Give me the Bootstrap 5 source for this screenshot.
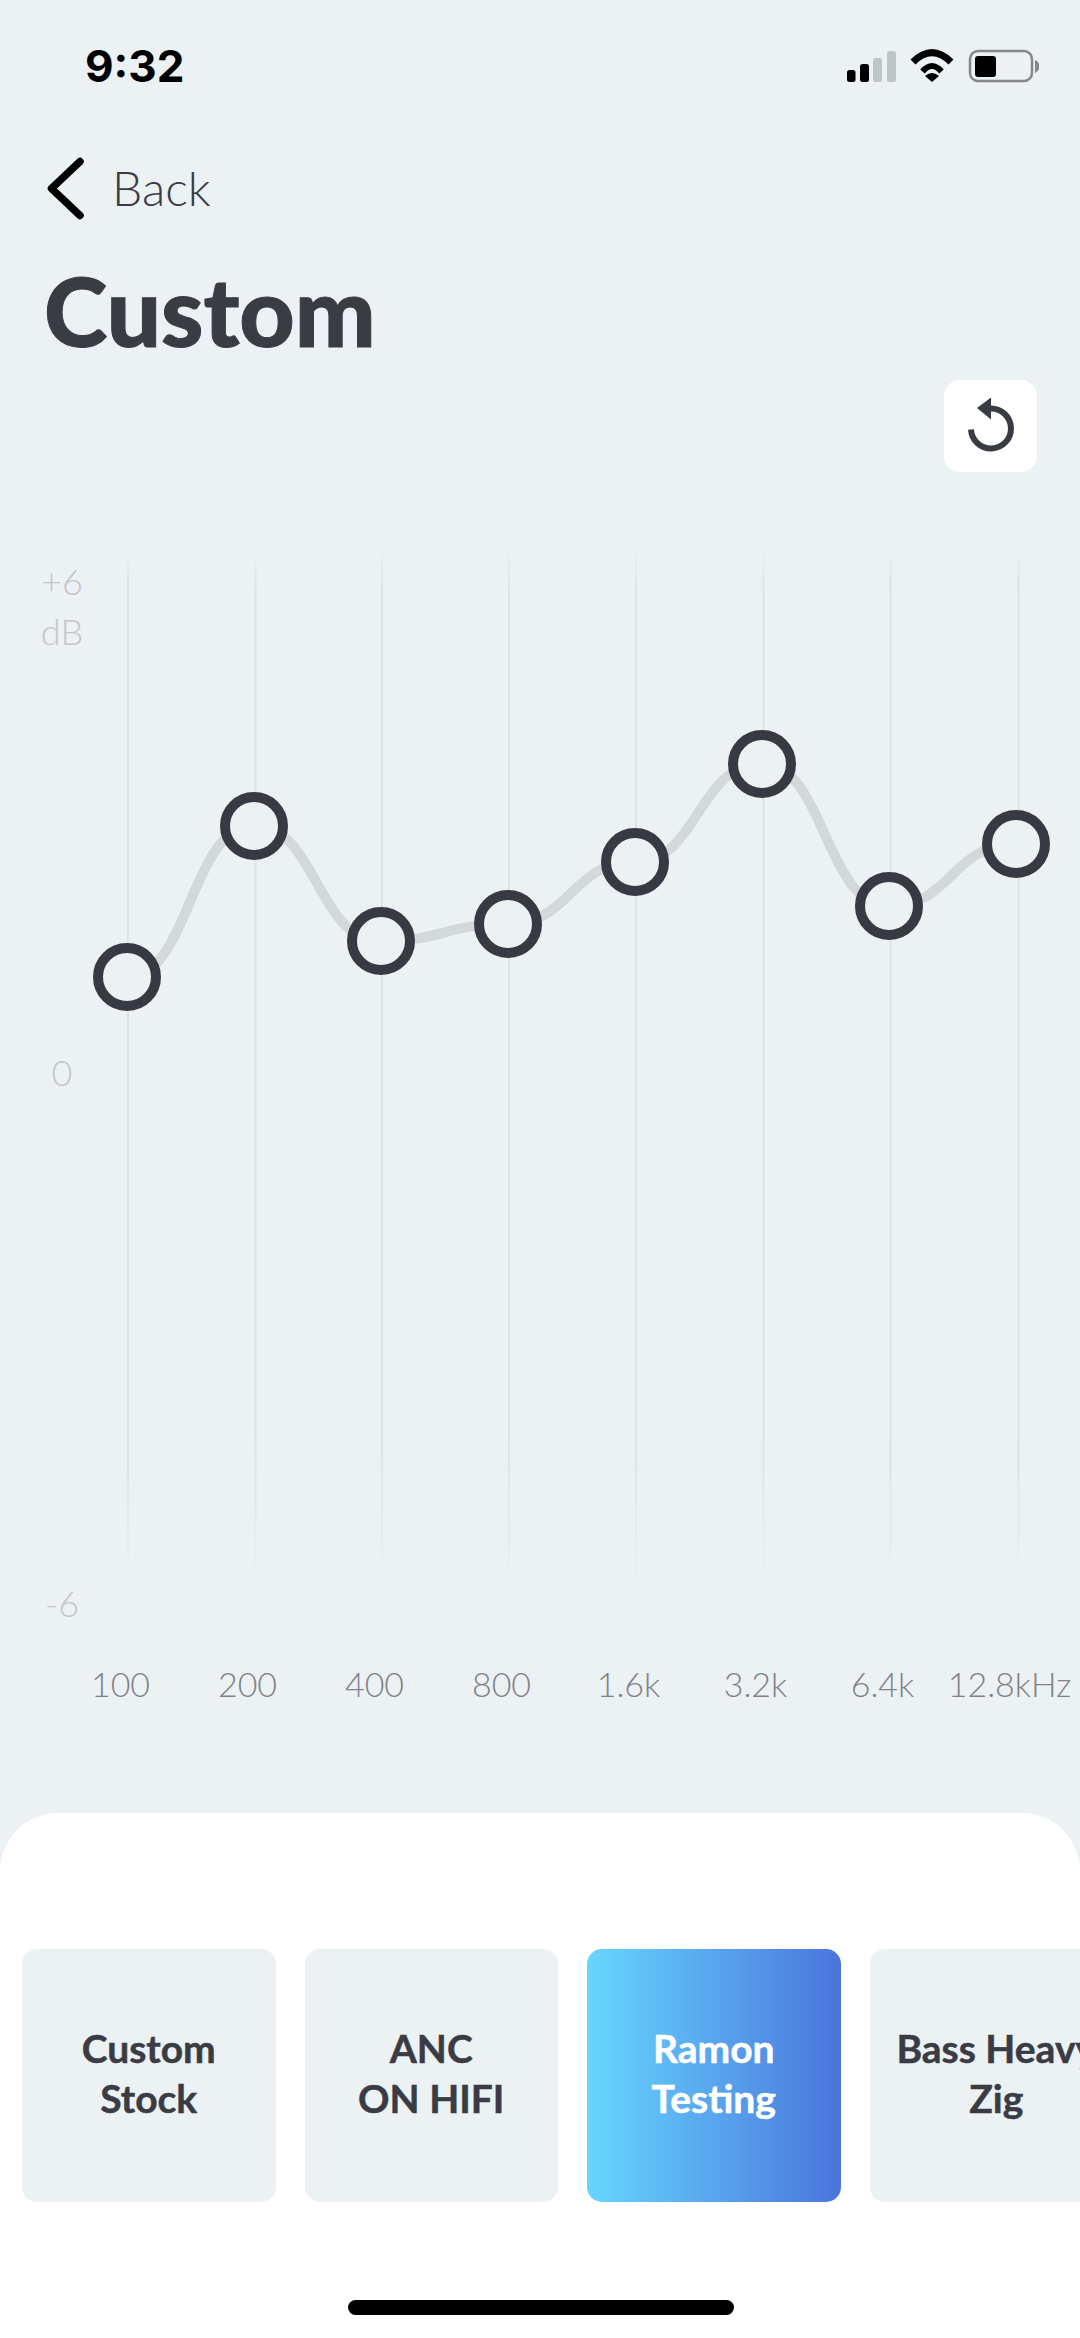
<!DOCTYPE html>
<html lang="en">
<head>
<meta charset="utf-8">
<title>Custom</title>
<link href="https://cdn.jsdelivr.net/npm/bootstrap@5.3.0/dist/css/bootstrap.min.css" rel="stylesheet">
<style>
html,body{margin:0;background:#ecf1f4}
.eq-shell{width:1080px;height:2338px;overflow:hidden;background:#ecf1f4;font-family:"Lato","Liberation Sans",sans-serif;color:#3a3c44}
.eq-status{height:132px;padding:0 41px 0 85px}
.eq-time{font-family:"Inter","Liberation Sans",sans-serif;font-weight:700;font-size:44px;line-height:1;color:#000}
.eq-back{height:76px;margin-top:18px;padding-left:47px;gap:25px}
.eq-back-label{font-size:48px;font-weight:300;line-height:1;color:#3a3c44}
.eq-title{font-size:96px;font-weight:900;line-height:100px;margin:0;padding-left:44px;margin-top:34px;color:#3a3c44;-webkit-text-stroke:1px #3a3c44}
.eq-reset-row{padding-right:43px;margin-top:20px}
.eq-reset{width:93px;height:92px;border-radius:16px;background:#fff;border:0;padding:0}
.eq-chart{height:1100px;margin-top:69px;position:relative}
.eq-chart svg{display:block}
.eq-axis{position:absolute;font-size:36px;font-weight:300;line-height:1;color:#c2c6c9;text-align:center;left:22px;width:80px}
.eq-axis-top{top:15px;line-height:50px}
.eq-axis-mid{top:513px}
.eq-axis-low{top:1044px}
.eq-freqs{display:grid;grid-template-columns:repeat(8,127px);padding-left:57px;margin-top:26px;font-size:34px;font-weight:300;line-height:1;color:#808286;text-align:center;white-space:nowrap}
.eq-sheet{margin-top:auto;background:#fff;height:525px;border-radius:58px 58px 0 0;padding:136px 0 0 22px;overflow:hidden}
.eq-presets{gap:29px}
.eq-preset{flex:0 0 253.500px;height:253px;border-radius:15px;background:#ecf1f4;font-size:39px;font-weight:700;line-height:50px;color:#3a3c44;text-align:center;white-space:nowrap;padding-bottom:6px;-webkit-text-stroke:.5px currentColor}
.eq-preset-on{background:linear-gradient(90deg,#67d6ff,#4a74dc);color:#fff}
.eq-home{width:386px;height:15px;border-radius:8px;background:#000;margin:98px auto 0;transform:translateX(-10px)}
</style>
</head>
<body>
<div class="eq-shell d-flex flex-column">
  <div class="eq-status d-flex justify-content-between align-items-center">
    <span class="eq-time">9:32</span>
    <svg width="200" height="40" viewBox="839 46 200 40" aria-hidden="true">
      <rect x="847" y="70" width="8.500" height="12" rx="2.500" fill="#000"/>
      <rect x="860" y="64" width="9" height="18" rx="2.500" fill="#000"/>
      <rect x="873" y="58" width="9" height="24" rx="2.500" fill="#bfc4c7"/>
      <rect x="887" y="51" width="9" height="31" rx="2.500" fill="#bfc4c7"/>
      <path d="M913 62Q932 43 951 62" fill="none" stroke="#000" stroke-width="7"/>
      <path d="M922.500 71.500Q932 60.500 941.500 71.500" fill="none" stroke="#000" stroke-width="6"/>
      <path d="M932 82L925 76Q932 70 939 76Z" fill="#000"/>
      <rect x="970" y="51" width="62" height="30" rx="8" fill="none" stroke="#85888b" stroke-width="2.500"/>
      <rect x="975" y="56" width="21" height="21" rx="3" fill="#000"/>
      <path d="M1035 60a7 7 0 0 1 0 13z" fill="#85888b"/>
    </svg>
  </div>

  <div class="eq-back d-flex align-items-center">
    <svg width="40" height="64" viewBox="46 156 40 64" aria-hidden="true"><path d="M79 161.500L50.500 188.500L79 215.500" fill="none" stroke="#000" stroke-width="7.500" stroke-linecap="round" stroke-linejoin="round"/></svg>
    <span class="eq-back-label">Back</span>
  </div>

  <h1 class="eq-title">Custom</h1>

  <div class="eq-reset-row d-flex justify-content-end">
    <button class="eq-reset d-flex align-items-center justify-content-center" type="button" aria-label="Reset">
      <svg width="93" height="92" viewBox="944 380 93 92" aria-hidden="true">
        <path d="M971 429.500a20 20 0 1 0 20-21" fill="none" stroke="#3a3c44" stroke-width="6" stroke-linecap="butt"/>
        <path d="M977 408l14-10.500v22z" fill="#3a3c44"/>
      </svg>
    </button>
  </div>

  <div class="eq-chart">
    <svg width="1080" height="1100" viewBox="0 540 1080 1100" aria-hidden="true">
      <defs>
        <linearGradient id="gridFade" gradientUnits="userSpaceOnUse" x1="0" y1="548" x2="0" y2="1590">
          <stop offset="0" stop-color="#dde2e6" stop-opacity="0"/>
          <stop offset="0.04" stop-color="#dde2e6"/>
          <stop offset="0.85" stop-color="#dde2e6"/>
          <stop offset="1" stop-color="#dde2e6" stop-opacity="0"/>
        </linearGradient>
      </defs>
      <g stroke="url(#gridFade)" stroke-width="2" fill="none">
        <path d="M128 548V1590M255.500 548V1590M382 548V1590M509 548V1590M636 548V1590M763.500 548V1590M890.500 548V1590M1018.500 548V1590"/>
      </g>
      <path d="M127 976C190 976 190 825 254 825C317 825 317 940 381 940C444 940 444 923 508 923C571 923 571 861 635 861C698 861 698 763 762 763C825 763 825 905 889 905C952 905 952 843 1016 843" fill="none" stroke="#d3d8db" stroke-width="10"/>
      <g fill="#ecf1f4" stroke="#373a42" stroke-width="10">
        <circle cx="127" cy="976" r="29"/>
        <circle cx="254" cy="825" r="29"/>
        <circle cx="381" cy="940" r="29"/>
        <circle cx="508" cy="923" r="29"/>
        <circle cx="635" cy="861" r="29"/>
        <circle cx="762" cy="763" r="29"/>
        <circle cx="889" cy="905" r="29"/>
        <circle cx="1016" cy="843" r="29"/>
      </g>
    </svg>
    <div class="eq-axis eq-axis-top">+6<br>dB</div>
    <div class="eq-axis eq-axis-mid">0</div>
    <div class="eq-axis eq-axis-low">-6</div>
  </div>

  <div class="eq-freqs">
    <span>100</span><span>200</span><span>400</span><span>800</span><span>1.6k</span><span>3.2k</span><span>6.4k</span><span>12.8kHz</span>
  </div>

  <div class="eq-sheet">
    <div class="eq-presets d-flex">
      <div class="eq-preset d-flex align-items-center justify-content-center">Custom<br>Stock</div>
      <div class="eq-preset d-flex align-items-center justify-content-center">ANC<br>ON HIFI</div>
      <div class="eq-preset eq-preset-on d-flex align-items-center justify-content-center">Ramon<br>Testing</div>
      <div class="eq-preset d-flex align-items-center justify-content-center">Bass Heavy<br>Zig</div>
    </div>
    <div class="eq-home"></div>
  </div>
</div>
<script src="https://cdn.jsdelivr.net/npm/bootstrap@5.3.0/dist/js/bootstrap.bundle.min.js"></script>
</body>
</html>
